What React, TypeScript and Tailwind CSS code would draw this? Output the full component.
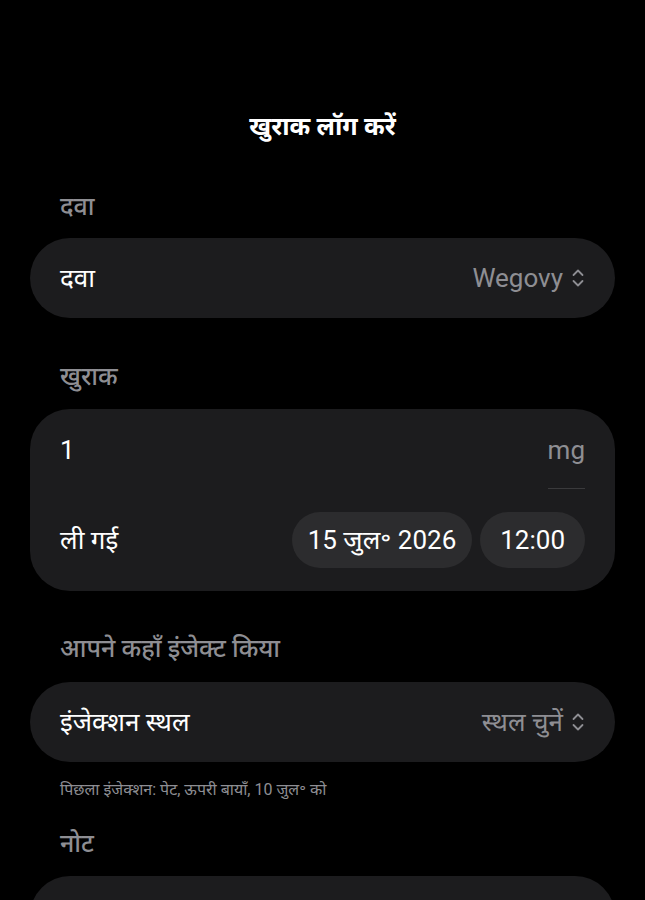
const font = { fontFamily: 'Roboto, "Noto Sans", "Noto Sans Devanagari", sans-serif' }

function UpDown() {
  return (
    <svg width="14" height="22" viewBox="0 0 14 22" fill="none" className="ml-[8px] text-[#8e8e93]">
      <path d="M2.5 8 L7 3.5 L11.5 8" stroke="currentColor" strokeWidth="1.8" strokeLinecap="round" strokeLinejoin="round" />
      <path d="M2.5 14 L7 18.5 L11.5 14" stroke="currentColor" strokeWidth="1.8" strokeLinecap="round" strokeLinejoin="round" />
    </svg>
  )
}

function Label({ children }: { children: React.ReactNode }) {
  return <div className="px-[60px] text-[25px] leading-[32px] font-medium text-[#8e8e93]">{children}</div>
}

function PickerRow({ label, value }: { label: string; value: string }) {
  return (
    <div className="mx-[30px] flex h-[80px] items-center justify-between rounded-[40px] bg-[#1c1c1e] px-[30px]">
      <span className="text-[26px] leading-[32px] text-white">{label}</span>
      <span className="flex items-center text-[26px] leading-[32px] text-[#8e8e93]">
        {value}
        <UpDown />
      </span>
    </div>
  )
}

export default function App() {
  return (
    <div style={font} className="h-[900px] overflow-hidden bg-black pt-[111px]">
      <h1 className="text-center text-[25px] leading-[32px] font-bold text-white">खुराक लॉग करें</h1>

      <div className="mt-[48px]">
        <Label>दवा</Label>
        <div className="mt-[15px]">
          <PickerRow label="दवा" value="Wegovy" />
        </div>
      </div>

      <div className="mt-[43px]">
        <Label>खुराक</Label>
        <div className="mx-[30px] mt-[16px] rounded-[40px] bg-[#1c1c1e] px-[30px] pb-[23px] pt-[25px]">
          <div className="flex items-center justify-between">
            <span className="text-[26px] leading-[32px] text-white">1</span>
            <span className="text-[26px] leading-[32px] text-[#8e8e93]">mg</span>
          </div>
          <div className="mt-[22px] flex justify-end">
            <div className="h-px w-[37px] bg-[#3a3a3c]" />
          </div>
          <div className="mt-[23px] flex items-center justify-between">
            <span className="text-[26px] leading-[32px] text-white">ली गई</span>
            <div className="flex gap-[8px]">
              <span className="flex h-[56px] items-center rounded-full bg-[#2c2c2e] px-[16px] text-[26px] text-white">15 जुल॰ 2026</span>
              <span className="flex h-[56px] items-center rounded-full bg-[#2c2c2e] px-[20px] text-[26px] text-white">12:00</span>
            </div>
          </div>
        </div>
      </div>

      <div className="mt-[42px]">
        <Label>आपने कहाँ इंजेक्ट किया</Label>
        <div className="mt-[17px]">
          <PickerRow label="इंजेक्शन स्थल" value="स्थल चुनें" />
        </div>
        <p className="mt-[16px] px-[60px] text-[16px] leading-[24px] text-[#8e8e93]">पिछला इंजेक्शन: पेट, ऊपरी बायाँ, 10 जुल॰ को</p>
      </div>

      <div className="mt-[26px]">
        <Label>नोट</Label>
        <div className="mx-[30px] mt-[16px] h-[120px] rounded-[40px] bg-[#1c1c1e]" />
      </div>
    </div>
  )
}
